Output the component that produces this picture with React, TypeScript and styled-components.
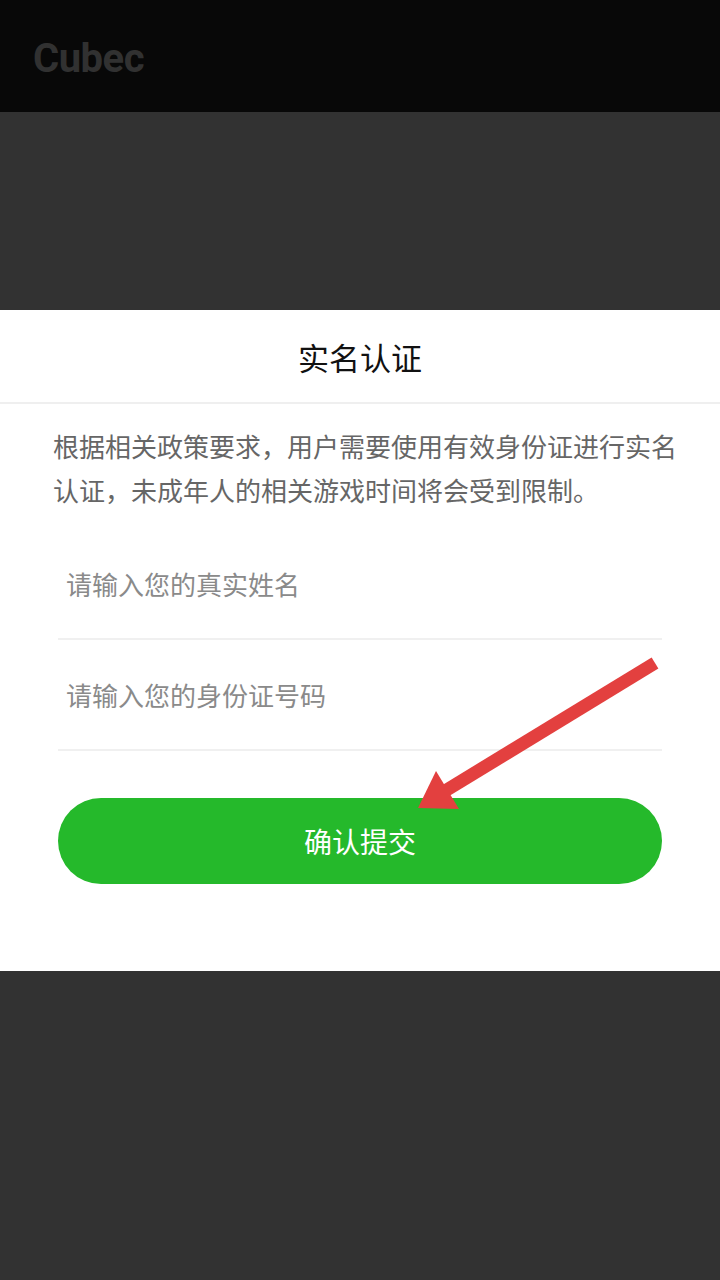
import React, { useState } from "react";
import styled, { createGlobalStyle } from "styled-components";

const GlobalStyle = createGlobalStyle`
  html, body {
    margin: 0;
    padding: 0;
    background: #323232;
  }
  * {
    box-sizing: border-box;
  }
`;

const Page = styled.div`
  position: relative;
  width: 720px;
  min-height: 1280px;
  display: flex;
  flex-direction: column;
  background: #323232;
  font-family: "Noto Sans CJK SC", "Noto Sans", sans-serif;
`;

const TopBar = styled.header`
  height: 112px;
  background: #080808;
  display: flex;
  align-items: center;
  padding: 4px 0 0 33px;
`;

const Brand = styled.h1`
  margin: 0;
  font-family: Roboto, "Liberation Sans", sans-serif;
  font-size: 40px;
  font-weight: 700;
  color: #313131;
  letter-spacing: -0.5px;
`;

const Dim = styled.div<{ $h?: number }>`
  height: ${(p) => (p.$h ? `${p.$h}px` : "auto")};
  flex: ${(p) => (p.$h ? "none" : "1")};
  background: #323232;
`;

const Sheet = styled.section`
  background: #fff;
  display: flex;
  flex-direction: column;
  padding-bottom: 87px;
`;

const SheetHeader = styled.div`
  height: 94px;
  display: flex;
  align-items: center;
  justify-content: center;
  border-bottom: 2px solid #efefef;
`;

const Title = styled.h2`
  margin: 0;
  font-size: 31px;
  font-weight: 400;
  color: #111;
`;

const Notice = styled.p`
  margin: 20px 42px 0 53px;
  font-size: 26px;
  line-height: 44px;
  color: #666;
`;

const Form = styled.form`
  margin: 17px 58px 0;
  display: flex;
  flex-direction: column;
`;

const Field = styled.input`
  height: 111px;
  border: none;
  border-bottom: 2px solid #f0f0f0;
  outline: none;
  padding: 0 8px;
  font-family: inherit;
  font-size: 26px;
  color: #333;
  background: transparent;

  &::placeholder {
    color: #8a8a8a;
  }
`;

const Submit = styled.button`
  margin-top: 47px;
  height: 86px;
  border: none;
  border-radius: 43px;
  background: #25b92b;
  color: #fff;
  font-family: inherit;
  font-size: 28px;
  cursor: pointer;
`;

const Annotation = styled.svg`
  position: absolute;
  top: 0;
  left: 0;
  width: 720px;
  height: 1280px;
  pointer-events: none;
`;

export default function App() {
  const [name, setName] = useState("");
  const [idNo, setIdNo] = useState("");

  return (
    <Page>
      <GlobalStyle />
      <TopBar>
        <Brand>Cubec</Brand>
      </TopBar>
      <Dim $h={198} />
      <Sheet>
        <SheetHeader>
          <Title>实名认证</Title>
        </SheetHeader>
        <Notice>
          根据相关政策要求，用户需要使用有效身份证进行实名认证，未成年人的相关游戏时间将会受到限制。
        </Notice>
        <Form onSubmit={(e) => e.preventDefault()}>
          <Field
            placeholder="请输入您的真实姓名"
            value={name}
            onChange={(e) => setName(e.target.value)}
          />
          <Field
            placeholder="请输入您的身份证号码"
            value={idNo}
            onChange={(e) => setIdNo(e.target.value)}
          />
          <Submit type="submit">确认提交</Submit>
        </Form>
      </Sheet>
      <Dim />

      {/* red pointer drawn over the submit button */}
      <Annotation viewBox="0 0 720 1280">
        <line x1="655" y1="663" x2="445" y2="791" stroke="#e3403f" strokeWidth="13" />
        <polygon points="436,771 418,808 459,809" fill="#e3403f" />
      </Annotation>
    </Page>
  );
}
